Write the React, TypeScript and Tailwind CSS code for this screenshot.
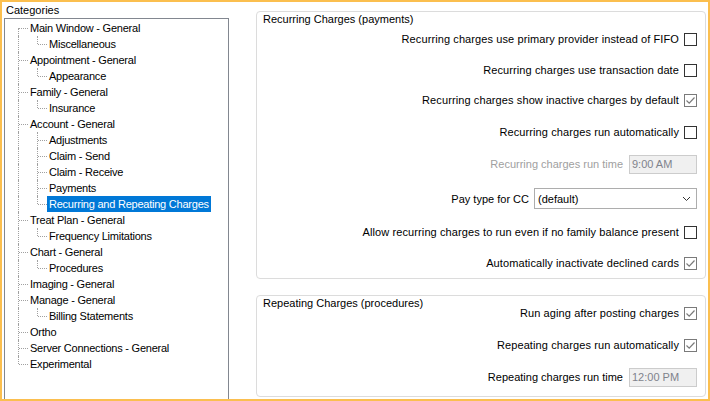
import React from "react";

type Node = { label: string; children?: string[] };

const tree: Node[] = [
    { label: "Main Window - General", children: ["Miscellaneous"] },
    { label: "Appointment - General", children: ["Appearance"] },
    { label: "Family - General", children: ["Insurance"] },
    {
        label: "Account - General",
        children: ["Adjustments", "Claim - Send", "Claim - Receive", "Payments", "Recurring and Repeating Charges"]
    },
    { label: "Treat Plan - General", children: ["Frequency Limitations"] },
    { label: "Chart - General", children: ["Procedures"] },
    { label: "Imaging - General" },
    { label: "Manage - General", children: ["Billing Statements"] },
    { label: "Ortho" },
    { label: "Server Connections - General" },
    { label: "Experimental" }
];

const SELECTED = "Recurring and Repeating Charges";

type Row = { label: string; depth: 0 | 1; first: boolean; last: boolean; lastChild?: boolean };

const rows: Row[] = [];
tree.forEach((n, i) => {
    rows.push({ label: n.label, depth: 0, first: i === 0, last: i === tree.length - 1 });
    n.children?.forEach((c, j) => {
        rows.push({ label: c, depth: 1, first: false, last: false, lastChild: j === n.children!.length - 1 });
    });
});

const dot = "border-dotted border-[#a0a0a0]";

const TreeRow = ({ row }: { row: Row }) => {
    const selected = row.label === SELECTED;
    return (
        <div className="relative flex h-[16px] items-center">
            {/* root connector */}
            {row.first && <div className={`absolute left-[13px] top-[8px] h-[8px] border-l ${dot}`} />}
            {row.last && <div className={`absolute left-[13px] top-0 h-[8px] border-l ${dot}`} />}
            {!row.first && !row.last && <div className={`absolute left-[13px] top-0 h-[16px] border-l ${dot}`} />}
            {row.depth === 0 && <div className={`absolute left-[14px] top-[8px] w-[9px] border-t ${dot}`} />}

            {/* child connector */}
            {row.depth === 1 && (
                <>
                    <div className={`absolute left-[32px] top-0 ${row.lastChild ? "h-[8px]" : "h-[16px]"} border-l ${dot}`} />
                    <div className={`absolute left-[33px] top-[8px] w-[9px] border-t ${dot}`} />
                </>
            )}

            <div className={row.depth === 0 ? "w-[23px] shrink-0" : "w-[42px] shrink-0"} />
            <span
                className={`h-[16px] px-[2px] leading-[16px] tracking-[-0.23px] whitespace-nowrap ${
                    selected ? "bg-[#0078d7] text-white" : "text-black"
                }`}
            >
                {row.label}
            </span>
        </div>
    );
};

const CheckBox = ({ checked = false }: { checked?: boolean }) => (
    <div
        className={`flex h-[13px] w-[13px] shrink-0 items-center justify-center border bg-white ${
            checked ? "border-[#7a7a7a]" : "border-[#333333]"
        }`}
    >
        {checked && (
            <svg width="11" height="11" viewBox="0 0 11 11">
                <path d="M1.5 5.5 L4.2 8.2 L9.5 2.5" fill="none" stroke="#7a7a7a" strokeWidth="1.2" />
            </svg>
        )}
    </div>
);

const CheckRow = ({ label, checked, className = "" }: { label: string; checked?: boolean; className?: string }) => (
    <div className={`flex h-[20px] items-center justify-end gap-[5px] ${className}`}>
        <span className="whitespace-nowrap tracking-[0.1px] text-black">{label}</span>
        <CheckBox checked={checked} />
    </div>
);

const TimeRow = ({ label, value, disabled, className = "" }: { label: string; value: string; disabled?: boolean; className?: string }) => (
    <div className={`flex h-[20px] items-center justify-end gap-[6px] ${className}`}>
        <span className={`whitespace-nowrap ${disabled ? "text-[#a0a0a0]" : "text-black"}`}>{label}</span>
        <div className="flex h-[19px] w-[68px] items-center border border-[#cccccc] bg-[#f0f0f0] pl-[2px] text-[#7f838c]">
            {value}
        </div>
    </div>
);

const GroupBox = ({ title, className = "", children }: { title: string; className?: string; children: React.ReactNode }) => (
    <div className={`relative rounded-[4px] border border-[#dcdcdc] pr-[8px] ${className}`}>
        <span className="absolute left-[6px] top-0 leading-[14px] text-black">{title}</span>
        {children}
    </div>
);

export default function App() {
    return (
        <div
            className="flex h-[401px] w-[710px] overflow-hidden border-2 border-[#fbbf4f] bg-white text-[11px] leading-[14px]"
            style={{ fontFamily: '"Liberation Sans", Arial, sans-serif' }}
        >
            {/* Left: Categories tree */}
            <div className="flex w-[227px] shrink-0 flex-col pl-[2px]">
                <div className="h-[16px] pl-[2px] pt-[1px] text-black">Categories</div>
                <div className="flex-1 border border-b-0 border-[#828790] pt-[1px]">
                    {rows.map((r) => (
                        <TreeRow key={r.label} row={r} />
                    ))}
                </div>
            </div>

            {/* Right: settings */}
            <div className="flex flex-1 flex-col pl-[27px] pr-[2px] pt-[9px]">
                <GroupBox title="Recurring Charges (payments)" className="pb-[5px] pt-[17px]">
                    <CheckRow label="Recurring charges use primary provider instead of FIFO" />
                    <CheckRow label="Recurring charges use transaction date" className="mt-[11px]" />
                    <CheckRow label="Recurring charges show inactive charges by default" checked className="mt-[10px]" />
                    <CheckRow label="Recurring charges run automatically" className="mt-[12px]" />
                    <TimeRow label="Recurring charges run time" value="9:00 AM" disabled className="mt-[12px]" />
                    <div className="mt-[14px] flex h-[21px] items-center justify-end gap-[5px]">
                        <span className="whitespace-nowrap text-black">Pay type for CC</span>
                        <div className="flex h-[21px] w-[163px] items-center justify-between border border-[#adadad] bg-white pl-[3px] pr-[5px] text-black">
                            <span>(default)</span>
                            <svg width="9" height="6" viewBox="0 0 9 6">
                                <path d="M1 1 L4.5 4.5 L8 1" fill="none" stroke="#333333" strokeWidth="1" />
                            </svg>
                        </div>
                    </div>
                    <CheckRow label="Allow recurring charges to run even if no family balance present" className="mt-[13px]" />
                    <CheckRow label="Automatically inactivate declined cards" checked className="mt-[11px]" />
                </GroupBox>

                <GroupBox title="Repeating Charges (procedures)" className="mt-[16px] pb-[9px] pt-[7px]">
                    <CheckRow label="Run aging after posting charges" checked />
                    <CheckRow label="Repeating charges run automatically" checked className="mt-[12px]" />
                    <TimeRow label="Repeating charges run time" value="12:00 PM" className="mt-[12px]" />
                </GroupBox>
            </div>
        </div>
    );
}
